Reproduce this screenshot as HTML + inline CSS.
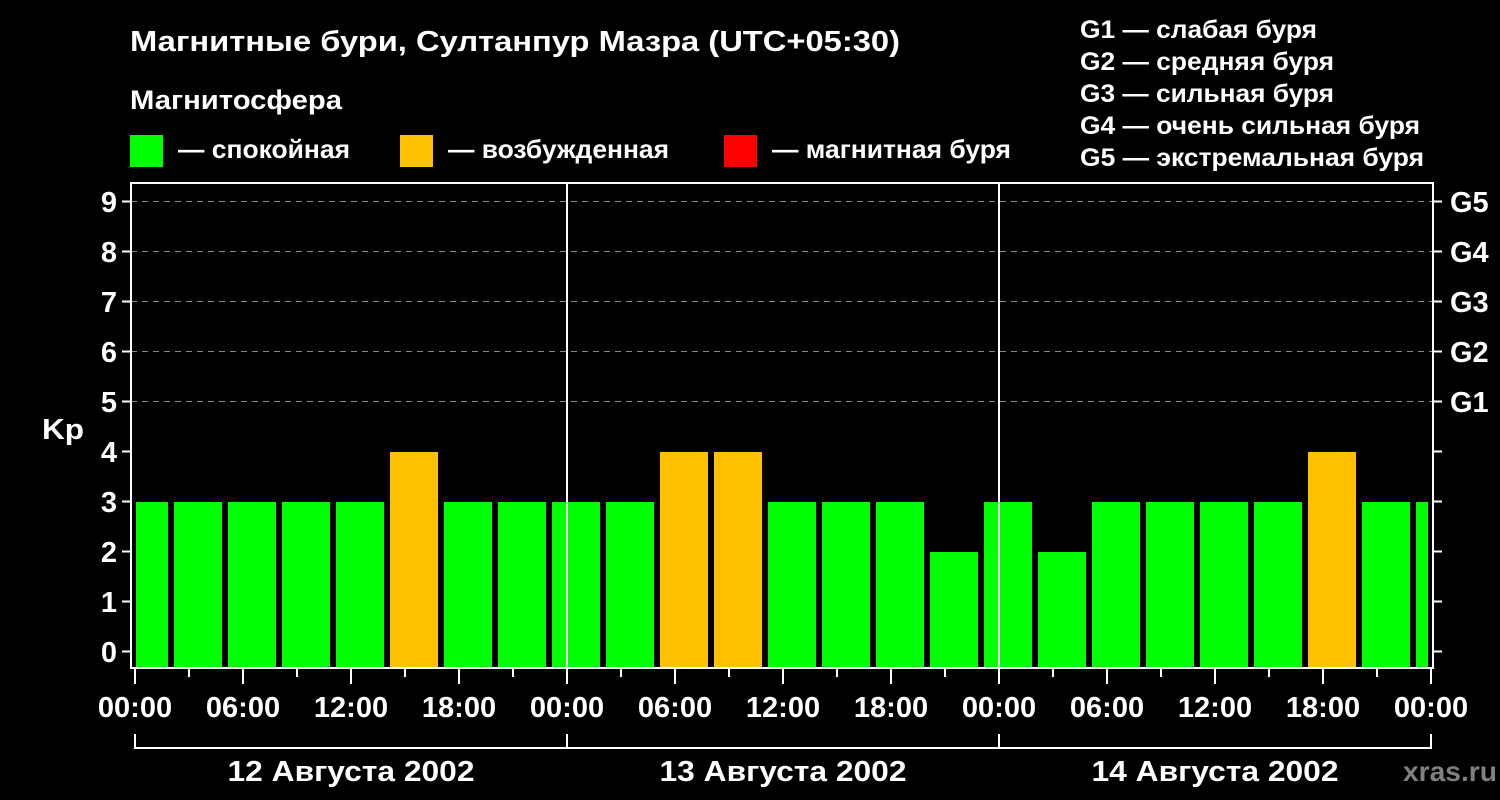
<!DOCTYPE html>
<html><head><meta charset="utf-8"><style>html,body{margin:0;background:#000;width:1500px;height:800px;overflow:hidden}svg{display:block}text{font-family:"Liberation Sans",sans-serif;font-weight:bold;fill:#fff}</style></head><body>
<svg width="1500" height="800" viewBox="0 0 1500 800">
<text x="130" y="51" font-size="29" textLength="770" lengthAdjust="spacingAndGlyphs">Магнитные бури, Султанпур Мазра (UTC+05:30)</text>
<text x="130" y="109" font-size="27" textLength="212" lengthAdjust="spacingAndGlyphs">Магнитосфера</text>
<rect x="130" y="135" width="33" height="32" fill="#00ff00"/><text x="178" y="158" font-size="26" textLength="172" lengthAdjust="spacingAndGlyphs">— спокойная</text>
<rect x="400" y="135" width="33" height="32" fill="#ffc000"/><text x="448" y="158" font-size="26" textLength="221" lengthAdjust="spacingAndGlyphs">— возбужденная</text>
<rect x="724" y="135" width="33" height="32" fill="#ff0000"/><text x="772" y="158" font-size="26" textLength="239" lengthAdjust="spacingAndGlyphs">— магнитная буря</text>
<g font-size="25"><text x="1080" y="38" textLength="237" lengthAdjust="spacingAndGlyphs">G1 — слабая буря</text><text x="1080" y="70" textLength="254" lengthAdjust="spacingAndGlyphs">G2 — средняя буря</text><text x="1080" y="102" textLength="254" lengthAdjust="spacingAndGlyphs">G3 — сильная буря</text><text x="1080" y="134" textLength="340" lengthAdjust="spacingAndGlyphs">G4 — очень сильная буря</text><text x="1080" y="166" textLength="344" lengthAdjust="spacingAndGlyphs">G5 — экстремальная буря</text></g>
<g stroke="#888" stroke-dasharray="6,5" stroke-width="1"><line x1="131" x2="1432" y1="201.5" y2="201.5"/><line x1="131" x2="1432" y1="251.5" y2="251.5"/><line x1="131" x2="1432" y1="301.5" y2="301.5"/><line x1="131" x2="1432" y1="351.5" y2="351.5"/><line x1="131" x2="1432" y1="401.5" y2="401.5"/></g>
<g fill="#00ff00">
<rect x="136" y="502" width="32" height="166"/><rect x="174" y="502" width="48" height="166"/><rect x="228" y="502" width="48" height="166"/><rect x="282" y="502" width="48" height="166"/><rect x="336" y="502" width="48" height="166"/>
<rect x="444" y="502" width="48" height="166"/><rect x="498" y="502" width="48" height="166"/><rect x="552" y="502" width="48" height="166"/><rect x="606" y="502" width="48" height="166"/>
<rect x="768" y="502" width="48" height="166"/><rect x="822" y="502" width="48" height="166"/><rect x="876" y="502" width="48" height="166"/><rect x="930" y="552" width="48" height="116"/><rect x="984" y="502" width="48" height="166"/><rect x="1038" y="552" width="48" height="116"/><rect x="1092" y="502" width="48" height="166"/><rect x="1146" y="502" width="48" height="166"/><rect x="1200" y="502" width="48" height="166"/><rect x="1254" y="502" width="48" height="166"/><rect x="1362" y="502" width="48" height="166"/><rect x="1416" y="502" width="12" height="166"/></g>
<g fill="#ffc000"><rect x="390" y="452" width="48" height="216"/><rect x="660" y="452" width="48" height="216"/><rect x="714" y="452" width="48" height="216"/><rect x="1308" y="452" width="48" height="216"/></g>
<g stroke="#fff" stroke-width="2" fill="none">
<rect x="131" y="183" width="1302" height="485"/>
<line x1="567" y1="183" x2="567" y2="668"/><line x1="999" y1="183" x2="999" y2="668"/>
<path d="M122 201.5h9M122 251.5h9M122 301.5h9M122 351.5h9M122 401.5h9M122 451.5h9M122 501.5h9M122 551.5h9M122 601.5h9M122 651.5h9"/>
<path d="M1433 201.5h9M1433 251.5h9M1433 301.5h9M1433 351.5h9M1433 401.5h9M1433 451.5h9M1433 501.5h9M1433 551.5h9M1433 601.5h9M1433 651.5h9"/>
<path d="M135 668v16M243 668v16M351 668v16M459 668v16M567 668v16M675 668v16M783 668v16M891 668v16M999 668v16M1107 668v16M1215 668v16M1323 668v16M1431 668v16"/>
<path d="M189 668v9M297 668v9M405 668v9M513 668v9M621 668v9M729 668v9M837 668v9M945 668v9M1053 668v9M1161 668v9M1269 668v9M1377 668v9"/>
<path d="M135 734v14H1431v-14M567 734v14M999 734v14"/>
</g>
<g font-size="29" text-anchor="end"><text x="117" y="212">9</text><text x="117" y="262">8</text><text x="117" y="312">7</text><text x="117" y="362">6</text><text x="117" y="412">5</text><text x="117" y="462">4</text><text x="117" y="512">3</text><text x="117" y="562">2</text><text x="117" y="612">1</text><text x="117" y="662">0</text></g>
<text x="42" y="439" font-size="29" textLength="42" lengthAdjust="spacingAndGlyphs">Kp</text>
<g font-size="29"><text x="1450" y="212">G5</text><text x="1450" y="262">G4</text><text x="1450" y="312">G3</text><text x="1450" y="362">G2</text><text x="1450" y="412">G1</text></g>
<g font-size="29" text-anchor="middle"><text x="135" y="717">00:00</text><text x="243" y="717">06:00</text><text x="351" y="717">12:00</text><text x="459" y="717">18:00</text><text x="567" y="717">00:00</text><text x="675" y="717">06:00</text><text x="783" y="717">12:00</text><text x="891" y="717">18:00</text><text x="999" y="717">00:00</text><text x="1107" y="717">06:00</text><text x="1215" y="717">12:00</text><text x="1323" y="717">18:00</text><text x="1431" y="717">00:00</text>
<text x="351" y="781" textLength="247" lengthAdjust="spacingAndGlyphs">12 Августа 2002</text><text x="783" y="781" textLength="247" lengthAdjust="spacingAndGlyphs">13 Августа 2002</text><text x="1215" y="781" textLength="247" lengthAdjust="spacingAndGlyphs">14 Августа 2002</text></g>
<text x="1403" y="781" font-size="28" textLength="94" lengthAdjust="spacingAndGlyphs" style="fill:#808080">xras.ru</text>
</svg>
</body></html>
